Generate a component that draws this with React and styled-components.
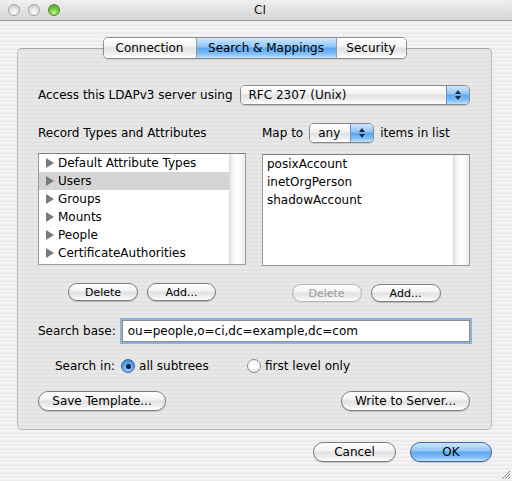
import React from "react"
import styled, { createGlobalStyle } from "styled-components"

const GlobalStyle = createGlobalStyle`
	html, body {
		margin: 0;
		padding: 0;
		background: #e8e8e8;
	}
	body {
		font-family: "DejaVu Sans", "Liberation Sans", sans-serif;
		font-size: 12px;
		color: #000;
	}
`

const STRIPES = "repeating-linear-gradient(180deg, #ececec 0px, #ececec 2px, #f3f3f3 2px, #f3f3f3 4px)"
const BOX_STRIPES = "repeating-linear-gradient(180deg, #e2e2e2 0px, #e2e2e2 2px, #e8e8e8 2px, #e8e8e8 4px)"
const WHITE_GLOSS = "linear-gradient(180deg, #ffffff 0%, #f4f4f4 40%, #e2e2e2 52%, #ececec 75%, #ffffff 100%)"
const BLUE_GLOSS = "linear-gradient(180deg, #cfe7fd 0%, #93c7f6 42%, #5ea8ee 52%, #7dbdf7 78%, #c0e2ff 100%)"

const Window = styled.div`
	position: relative;
	width: 512px;
	height: 481px;
	background: ${STRIPES};
	display: flex;
	flex-direction: column;
	overflow: hidden;
	border-radius: 5px 5px 0 0;
`

const TitleBar = styled.div`
	height: 21px;
	flex: none;
	display: grid;
	grid-template-columns: 1fr auto 1fr;
	align-items: center;
	background: linear-gradient(180deg, #f0f0f0 0%, #e2e2e2 50%, #d6d6d6 100%);
	border-bottom: 1px solid #9c9c9c;
	box-sizing: border-box;
	padding-left: 8px;
`

const Lights = styled.div`
	display: flex;
	gap: 8px;
`

const Light = styled.span`
	width: 12px;
	height: 12px;
	border-radius: 50%;
	box-sizing: border-box;
	border: 1px solid ${p => (p.$on ? "#4f8a2a" : "#a3a3a3")};
	background: ${p =>
		p.$on
			? "radial-gradient(circle at 50% 75%, #c8f59c 0%, #78c93a 45%, #4c9a1c 100%)"
			: "radial-gradient(circle at 50% 75%, #ffffff 0%, #e3e3e3 50%, #bdbdbd 100%)"};
`

const Title = styled.div`
	font-size: 12px;
	color: #1a1a1a;
`

const Body = styled.div`
	padding: 16px 20px 0 17px;
	display: flex;
	flex-direction: column;
`

const TabBar = styled.div`
	position: relative;
	z-index: 1;
	align-self: center;
	display: flex;
	height: 20px;
	margin-bottom: -11px;
	border: 1px solid #8d8d8d;
	border-radius: 5px;
	overflow: hidden;
	box-shadow: 0 1px 1px rgba(0, 0, 0, 0.12);
`

const Tab = styled.div`
	display: flex;
	align-items: center;
	justify-content: center;
	width: ${p => p.$w}px;
	box-sizing: border-box;
	background: ${p => (p.$active ? BLUE_GLOSS : WHITE_GLOSS)};
	border-left: ${p => (p.$first ? "none" : "1px solid #9a9a9a")};
	font-size: 12px;
`

const GroupBox = styled.div`
	height: 382px;
	box-sizing: border-box;
	border: 1px solid #b9b9b9;
	border-top-color: #a8a8a8;
	border-radius: 5px;
	background: ${BOX_STRIPES};
	padding: 36px 21px 0 20px;
	display: flex;
	flex-direction: column;
`

const Row = styled.div`
	display: flex;
	align-items: center;
	gap: ${p => p.$gap || 0}px;
	margin-top: ${p => p.$mt || 0}px;
	padding-left: ${p => p.$pl || 0}px;
	justify-content: ${p => p.$justify || "flex-start"};
`

const Label = styled.span`
	white-space: nowrap;
`

const Popup = styled.div`
	display: flex;
	height: 20px;
	flex: ${p => (p.$grow ? 1 : "none")};
	width: ${p => (p.$w ? `${p.$w}px` : "auto")};
	box-sizing: border-box;
	border: 1px solid #8a8a8a;
	border-radius: 5px;
	overflow: hidden;
	box-shadow: 0 1px 1px rgba(0, 0, 0, 0.15);
`

const PopupValue = styled.div`
	flex: 1;
	display: flex;
	align-items: center;
	padding-left: 8px;
	background: ${WHITE_GLOSS};
`

const PopupArrows = styled.div`
	width: 22px;
	display: flex;
	align-items: center;
	justify-content: center;
	background: ${BLUE_GLOSS};
	border-left: 1px solid #6a8fc0;
`

const Columns = styled.div`
	display: grid;
	grid-template-columns: 208px 208px;
	column-gap: 16px;
	margin-top: ${p => p.$mt || 0}px;
`

const ListBox = styled.div`
	height: 112px;
	box-sizing: border-box;
	border: 1px solid #9a9a9a;
	border-top-color: #7f7f7f;
	background: #fff;
	display: flex;
	margin-top: 11px;
`

const ListItems = styled.div`
	flex: 1;
	padding-top: 0;
`

const ListRow = styled.div`
	height: 18px;
	display: flex;
	align-items: center;
	padding-left: ${p => (p.$tree ? 7 : 4)}px;
	background: ${p => (p.$selected ? "#d4d4d4" : "transparent")};
	white-space: nowrap;
`

const Disclosure = styled.span`
	width: 0;
	height: 0;
	border-top: 5px solid transparent;
	border-bottom: 5px solid transparent;
	border-left: 8px solid #7a7a7a;
	margin-right: 4px;
`

const Scroller = styled.div`
	width: 15px;
	background: linear-gradient(90deg, #e6e6e6 0%, #fafafa 30%, #ffffff 55%, #ececec 100%);
	border-left: 1px solid #dcdcdc;
`

const ButtonRow = styled.div`
	display: flex;
	justify-content: center;
	gap: 9px;
	margin-top: 18px;
`

const Button = styled.div`
	display: flex;
	align-items: center;
	justify-content: center;
	box-sizing: border-box;
	width: ${p => p.$w}px;
	height: ${p => p.$h || 20}px;
	border-radius: 10px;
	border: 1px solid ${p => (p.$default ? "#44699f" : p.$disabled ? "#b5b5b5" : "#7e7e7e")};
	background: ${p => (p.$default ? BLUE_GLOSS : WHITE_GLOSS)};
	color: ${p => (p.$disabled ? "#9a9a9a" : "#000")};
	box-shadow: 0 1px 1px rgba(0, 0, 0, ${p => (p.$disabled ? 0.05 : 0.18)});
	font-size: ${p => (p.$small ? 11 : 12)}px;
	white-space: nowrap;
`

const TextField = styled.div`
	flex: 1;
	height: 22px;
	box-sizing: border-box;
	display: flex;
	align-items: center;
	padding-left: 5px;
	background: #fff;
	border: 1px solid #8d8d8d;
	box-shadow: 0 0 0 2px #8fb2dd;
`

const RadioOption = styled.label`
	display: flex;
	align-items: center;
	gap: 4px;
	width: ${p => (p.$w ? `${p.$w}px` : "auto")};
`

const RadioDot = styled.span`
	width: 14px;
	height: 14px;
	box-sizing: border-box;
	border-radius: 50%;
	display: flex;
	align-items: center;
	justify-content: center;
	border: 1px solid ${p => (p.$checked ? "#3c649c" : "#8a8a8a")};
	background: ${p =>
		p.$checked
			? "radial-gradient(circle at 50% 70%, #a8d6ff 0%, #5a9fe6 55%, #2f6fc0 100%)"
			: "linear-gradient(180deg, #f4f4f4 0%, #ffffff 60%, #e2e2e2 100%)"};

	&::after {
		content: "";
		display: ${p => (p.$checked ? "block" : "none")};
		width: 5px;
		height: 5px;
		border-radius: 50%;
		background: #0d1d33;
	}
`

const Footer = styled.div`
	display: flex;
	justify-content: flex-end;
	gap: 14px;
	margin-top: 12px;
`

const Grip = styled.svg`
	position: absolute;
	right: 1px;
	bottom: 1px;
`

const ArrowsIcon = () => (
	<svg width="8" height="12" viewBox="0 0 8 12">
		<path d="M4 1 L7 5 L1 5 Z" fill="#1b2b44" />
		<path d="M4 11 L7 7 L1 7 Z" fill="#1b2b44" />
	</svg>
)

const recordTypes = [
	"Default Attribute Types",
	"Users",
	"Groups",
	"Mounts",
	"People",
	"CertificateAuthorities"
]

const mappings = ["posixAccount", "inetOrgPerson", "shadowAccount"]

export default function App() {
	return (
		<>
			<GlobalStyle />
			<Window>
				<TitleBar>
					<Lights>
						<Light />
						<Light />
						<Light $on />
					</Lights>
					<Title>CI</Title>
					<div />
				</TitleBar>

				<Body>
					<TabBar>
						<Tab $w={92} $first>Connection</Tab>
						<Tab $w={140} $active>Search &amp; Mappings</Tab>
						<Tab $w={70}>Security</Tab>
					</TabBar>

					<GroupBox>
						<Row $gap={7}>
							<Label>Access this LDAPv3 server using</Label>
							<Popup $grow>
								<PopupValue>RFC 2307 (Unix)</PopupValue>
								<PopupArrows><ArrowsIcon /></PopupArrows>
							</Popup>
						</Row>

						<Columns $mt={18}>
							<div>
								<Row style={{ height: 19 }}>
									<Label>Record Types and Attributes</Label>
								</Row>
								<ListBox>
									<ListItems>
										{recordTypes.map(t => (
											<ListRow key={t} $tree $selected={t === "Users"}>
												<Disclosure />
												{t}
											</ListRow>
										))}
									</ListItems>
									<Scroller />
								</ListBox>
								<ButtonRow>
									<Button $w={70} $h={18} $small>Delete</Button>
									<Button $w={69} $h={18} $small>Add...</Button>
								</ButtonRow>
							</div>

							<div>
								<Row $gap={6}>
									<Label>Map to</Label>
									<Popup $w={65}>
										<PopupValue>any</PopupValue>
										<PopupArrows><ArrowsIcon /></PopupArrows>
									</Popup>
									<Label>items in list</Label>
								</Row>
								<ListBox>
									<ListItems>
										{mappings.map(m => (
											<ListRow key={m}>{m}</ListRow>
										))}
									</ListItems>
									<Scroller />
								</ListBox>
								<ButtonRow>
									<Button $w={70} $h={18} $small $disabled>Delete</Button>
									<Button $w={70} $h={18} $small>Add...</Button>
								</ButtonRow>
							</div>
						</Columns>

						<Row $mt={18} $gap={6}>
							<Label>Search base:</Label>
							<TextField>ou=people,o=ci,dc=example,dc=com</TextField>
						</Row>

						<Row $mt={17} $pl={17} $gap={6}>
							<Label>Search in:</Label>
							<RadioOption $w={120}>
								<RadioDot $checked />
								all subtrees
							</RadioOption>
							<RadioOption>
								<RadioDot />
								first level only
							</RadioOption>
						</Row>

						<Row $mt={18} $justify="space-between">
							<Button $w={128}>Save Template...</Button>
							<Button $w={129}>Write to Server...</Button>
						</Row>
					</GroupBox>

					<Footer>
						<Button $w={83}>Cancel</Button>
						<Button $w={82} $default>OK</Button>
					</Footer>
				</Body>

				<Grip width="12" height="12" viewBox="0 0 12 12">
					<path d="M11 3 L3 11 M11 6 L6 11 M11 9 L9 11" stroke="#8a8a8a" strokeWidth="1" />
				</Grip>
			</Window>
		</>
	)
}
